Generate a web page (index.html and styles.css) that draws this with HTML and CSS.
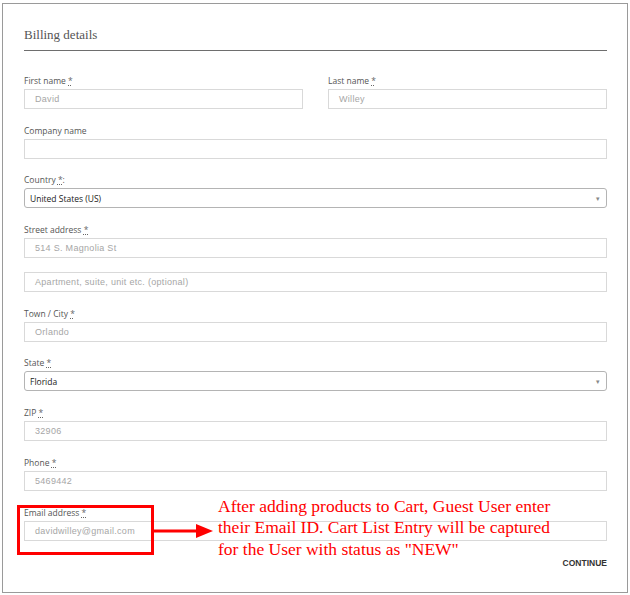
FILE: index.html
```html
<!DOCTYPE html>
<html>
<head>
<meta charset="utf-8">
<link rel="stylesheet" href="styles.css">
</head>
<body>
<div class="frame">
  <h2 class="title">Billing details</h2>
  <div class="form">
    <div class="row2">
      <div class="field">
        <div class="label">First name <span class="req">*</span></div>
        <div class="input">David</div>
      </div>
      <div class="field">
        <div class="label">Last name <span class="req">*</span></div>
        <div class="input">Willey</div>
      </div>
    </div>
    <div class="field">
      <div class="label">Company name</div>
      <div class="input"></div>
    </div>
    <div class="field">
      <div class="label">Country <span class="req">*</span>:</div>
      <div class="select"><span>United States (US)</span><span class="arrow">&#9662;</span></div>
    </div>
    <div class="field">
      <div class="label">Street address <span class="req">*</span></div>
      <div class="input">514 S. Magnolia St</div>
      <div class="input second">Apartment, suite, unit etc. (optional)</div>
    </div>
    <div class="field">
      <div class="label">Town / City <span class="req">*</span></div>
      <div class="input">Orlando</div>
    </div>
    <div class="field">
      <div class="label">State <span class="req">*</span></div>
      <div class="select"><span>Florida</span><span class="arrow">&#9662;</span></div>
    </div>
    <div class="field">
      <div class="label">ZIP <span class="req">*</span></div>
      <div class="input">32906</div>
    </div>
    <div class="field">
      <div class="label">Phone <span class="req">*</span></div>
      <div class="input">5469442</div>
    </div>
    <div class="field">
      <div class="label">Email address <span class="req">*</span></div>
      <div class="input">davidwilley@gmail.com</div>
    </div>
    <div class="actions"><span class="continue">CONTINUE</span></div>
  </div>
  <div class="redbox"></div>
  <svg class="arrowsvg" width="66" height="20" viewBox="0 0 66 20">
    <line x1="0" y1="10" x2="48" y2="10" stroke="#ff0000" stroke-width="3"/>
    <polygon points="45,3 62,10 45,17" fill="#ff0000"/>
  </svg>
  <div class="note">After adding products to Cart, Guest User enter<br>their Email ID. Cart List Entry will be captured<br>for the User with status as "NEW"</div>
</div>
</body>
</html>
```
FILE: styles.css
```css
html, body {
  margin: 0;
  padding: 0;
  background: #ffffff;
}
.frame {
  position: relative;
  box-sizing: border-box;
  margin: 3px 0 0 2px;
  width: 626px;
  height: 590px;
  border: 1px solid #9a9a9a;
  padding: 23px 20px 0 21px;
}
.title {
  margin: 0;
  font-family: "Liberation Serif", serif;
  font-weight: normal;
  font-size: 13px;
  line-height: 16px;
  color: #555555;
  padding-bottom: 7px;
  border-bottom: 1px solid #6e6e6e;
}
.form {
  margin-top: 24px;
  display: flex;
  flex-direction: column;
  gap: 15.7px;
}
.row2 {
  display: grid;
  grid-template-columns: 1fr 1fr;
  column-gap: 25px;
}
.field {
  display: flex;
  flex-direction: column;
}
.label {
  font-family: "Open Sans", "Noto Sans", sans-serif;
  font-size: 8.5px;
  line-height: 12px;
  height: 12px;
  color: #555555;
  margin-bottom: 2px;
}
.req {
  text-decoration: underline dotted;
  color: #666666;
}
.input {
  box-sizing: border-box;
  height: 20px;
  border: 1px solid #d9d9d9;
  padding: 0 10px;
  font-family: "Liberation Sans", Arial, sans-serif;
  font-size: 9px;
  letter-spacing: 0.3px;
  line-height: 18px;
  color: #a6a6a6;
}
.input.second {
  margin-top: 14px;
}
.select {
  box-sizing: border-box;
  height: 20px;
  border: 1px solid #b4b4b4;
  border-radius: 3px;
  padding: 0 6px 0 5px;
  display: flex;
  justify-content: space-between;
  align-items: center;
  font-family: "Open Sans", "Noto Sans", sans-serif;
  font-size: 8.5px;
  color: #222222;
}
.arrow {
  font-size: 7px;
  color: #888888;
}
.actions {
  display: flex;
  justify-content: flex-end;
  margin-top: 2px;
}
.continue {
  font-family: "Liberation Sans", Arial, sans-serif;
  font-weight: bold;
  font-size: 8.5px;
  line-height: 10px;
  color: #333333;
}
.redbox {
  position: absolute;
  left: 14px;
  top: 501px;
  width: 131px;
  height: 44px;
  border: 3px solid #ff0000;
}
.arrowsvg {
  position: absolute;
  left: 148px;
  top: 517px;
}
.note {
  position: absolute;
  left: 215px;
  top: 492px;
  font-family: "Liberation Serif", serif;
  font-size: 17.5px;
  line-height: 21.3px;
  color: #ff0000;
  white-space: nowrap;
}
```
